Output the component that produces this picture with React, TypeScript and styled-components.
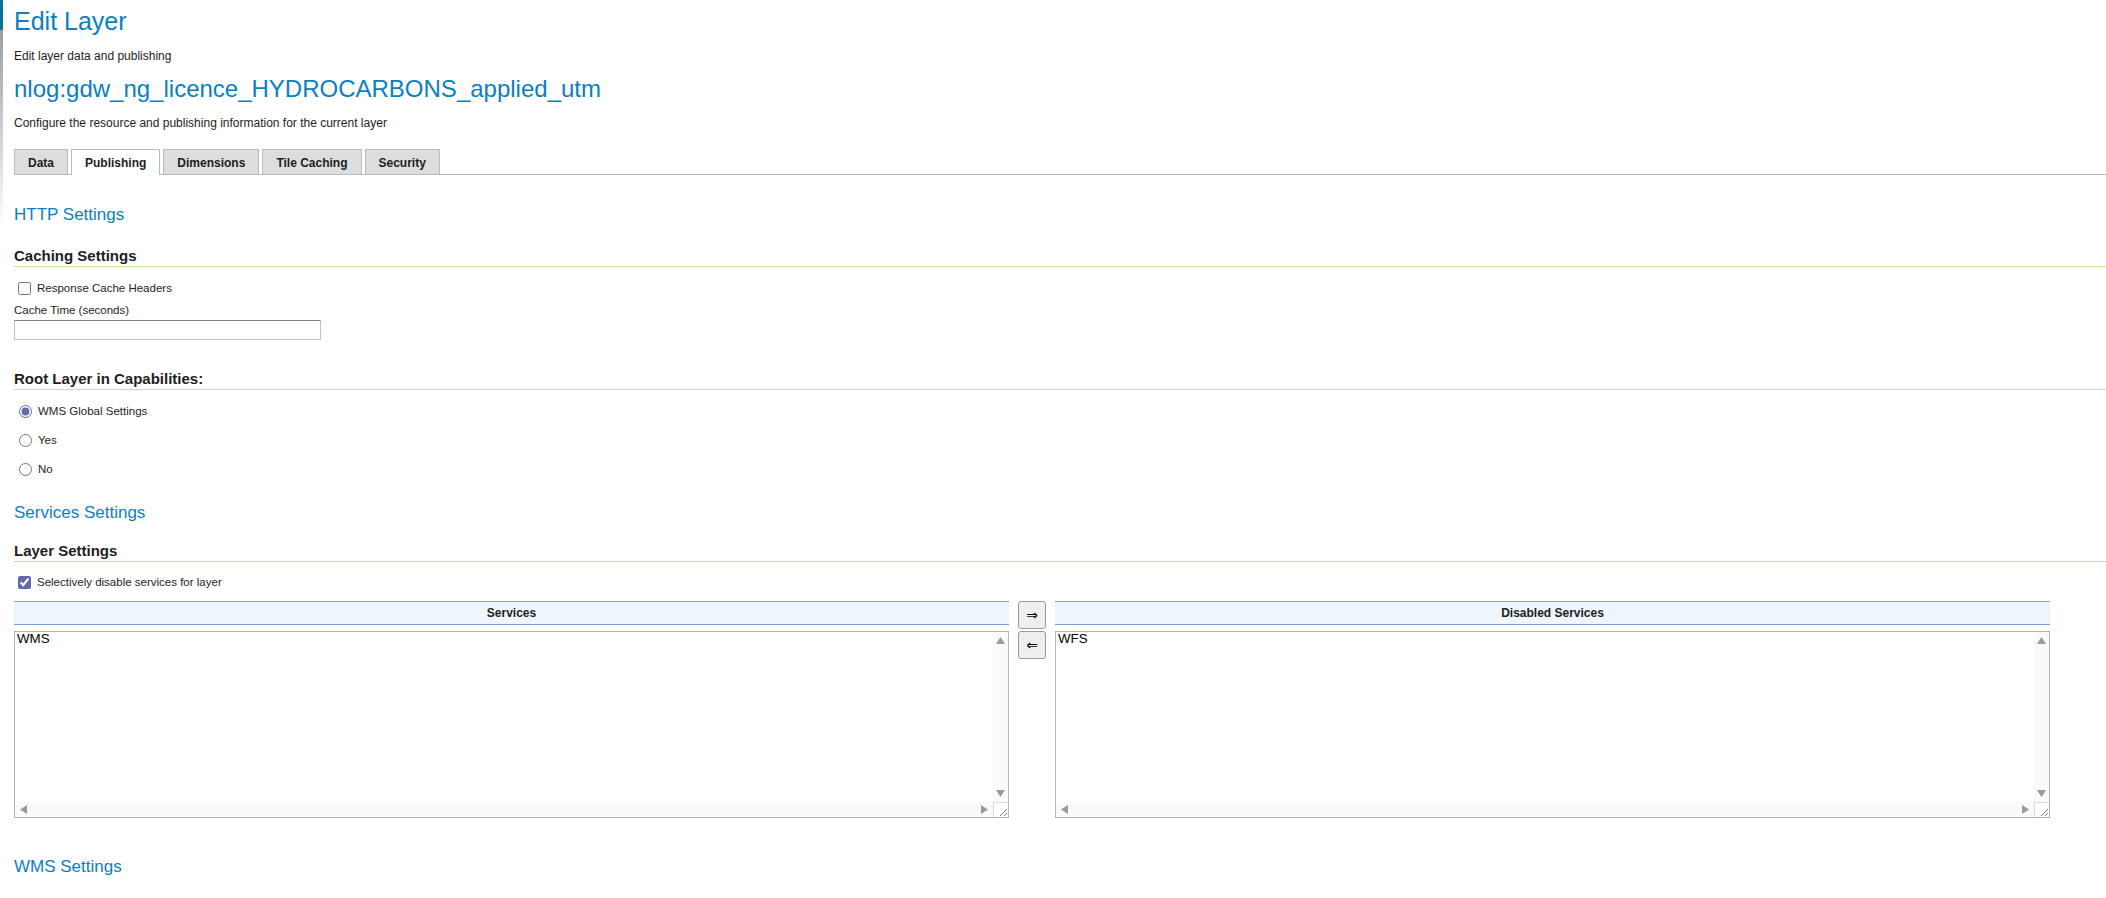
import React from "react";
import styled, { createGlobalStyle } from "styled-components";

const GlobalStyle = createGlobalStyle`
  html, body { margin: 0; padding: 0; background: #fff; }
  body {
    font-family: "Liberation Sans", Arial, sans-serif;
    color: #1e1e1e;
  }
`;

const BLUE = "#0b80be";

const Page = styled.div`
  display: flex;
  align-items: flex-start;
  width: 2106px;
  min-height: 898px;
  overflow: hidden;
`;

const SidebarEdge = styled.div`
  flex: 0 0 3px;
  height: 230px;
  background: linear-gradient(
    to bottom,
    #0d6f9c 0,
    #0d6f9c 30px,
    #9c9c9c 30px,
    #d4d4d4 140px,
    #ffffff 230px
  );
`;

const Content = styled.main`
  flex: 1;
  min-width: 0;
  padding-left: 11px;
`;

const PageTitle = styled.h1`
  margin: 3px 0 0;
  font-size: 25px;
  line-height: 36px;
  font-weight: normal;
  color: ${BLUE};
`;

const Description = styled.p<{ $top: number }>`
  margin: ${(p) => p.$top}px 0 0;
  font-size: 12px;
  line-height: 16px;
`;

const LayerName = styled.h2`
  margin: 10px 0 0;
  font-size: 24px;
  line-height: 30px;
  font-weight: normal;
  color: ${BLUE};
`;

const TabBar = styled.nav`
  display: flex;
  gap: 3px;
  margin-top: 18px;
  border-bottom: 1px solid #bbbbbb;
`;

const Tab = styled.div<{ $active?: boolean }>`
  padding: 2px 13px ${(p) => (p.$active ? "1px" : "0")};
  margin-bottom: ${(p) => (p.$active ? "-1px" : "0")};
  line-height: 22px;
  font-size: 12px;
  font-weight: bold;
  color: #1e1e1e;
  border: 1px solid #bbbbbb;
  border-bottom: none;
  background: ${(p) => (p.$active ? "#ffffff" : "#dddddd")};
`;

const SectionTitle = styled.h3<{ $top: number }>`
  margin: ${(p) => p.$top}px 0 0;
  font-size: 17px;
  line-height: 22px;
  font-weight: normal;
  color: ${BLUE};
`;

const GroupTitle = styled.h4<{ $top: number }>`
  margin: ${(p) => p.$top}px 0 0;
  font-size: 15px;
  line-height: 20px;
  font-weight: bold;
  color: #1e1e1e;
  border-bottom: 1px solid #c4e09c;
`;

const OptionRow = styled.label<{ $top?: number }>`
  display: flex;
  align-items: center;
  height: 16px;
  margin-top: ${(p) => p.$top ?? 0}px;
  font-size: 11.5px;
  line-height: 16px;
`;

const CheckBox = styled.input.attrs({ type: "checkbox" })`
  width: 13px;
  height: 13px;
  margin: 0 6px 0 4px;
  accent-color: #6669a9;
`;

const Radio = styled.input.attrs({ type: "radio" })`
  width: 13px;
  height: 13px;
  margin: 0 6px 0 5px;
  accent-color: #6669a9;
`;

const RadioGroup = styled.div`
  display: flex;
  flex-direction: column;
  gap: 13px;
  margin-top: 13px;
`;

const FieldLabel = styled.div`
  margin-top: 6px;
  font-size: 11.5px;
  line-height: 16px;
`;

const TextField = styled.input`
  display: block;
  box-sizing: border-box;
  width: 307px;
  height: 20px;
  margin: 2px 0 0;
  border: 1px solid #c2c2c2;
  border-top-color: #808080;
  background: #fff;
`;

const DualList = styled.div`
  display: grid;
  grid-template-columns: 1fr 28px 1fr;
  column-gap: 9px;
  width: 2036px;
  margin-top: 11px;
  align-items: start;
`;

const ListColumn = styled.div`
  display: flex;
  flex-direction: column;
  gap: 6px;
`;

const ListHeader = styled.div`
  border-top: 1px solid #7aa3d4;
  border-bottom: 1px solid #7aa3d4;
  background: #eef5fd;
  text-align: center;
  font-size: 12px;
  font-weight: bold;
  line-height: 22px;
`;

const ListBox = styled.div`
  display: grid;
  grid-template-columns: 1fr 15px;
  grid-template-rows: 1fr 15px;
  box-sizing: border-box;
  height: 187px;
  border: 1px solid #b5b5b5;
  background: #fff;
`;

const ListItems = styled.div`
  padding: 0 2px;
  font-family: "Liberation Sans", Arial, sans-serif;
  font-size: 13.33px;
  line-height: 14px;
  color: #000;
`;

const VScroll = styled.div`
  display: flex;
  flex-direction: column;
  justify-content: space-between;
  align-items: center;
  padding: 5px 0 5px;
  background: #fafafa;
`;

const HScroll = styled.div`
  display: flex;
  justify-content: space-between;
  align-items: center;
  padding: 0 5px 0 5px;
  background: #fafafa;
`;

const Corner = styled.div`
  display: flex;
  align-items: flex-end;
  justify-content: flex-end;
  border-left: 1px solid #dcdcdc;
  border-top: 1px solid #dcdcdc;
  background: #fff;
`;

const ButtonStack = styled.div`
  display: flex;
  flex-direction: column;
  gap: 2px;
`;

const MoveButton = styled.button`
  box-sizing: border-box;
  width: 28px;
  height: 28px;
  padding: 0;
  border: 1px solid #9a9a9a;
  border-radius: 3px;
  background: #efefef;
  color: #000;
  font-family: "DejaVu Sans", sans-serif;
  font-size: 14px;
  line-height: 26px;
`;

const Arrow = ({ dir }: { dir: "up" | "down" | "left" | "right" }) => {
  const pts = {
    up: "0,7 4.5,0 9,7",
    down: "0,0 9,0 4.5,7",
    left: "7,0 7,9 0,4.5",
    right: "0,0 7,4.5 0,9",
  }[dir];
  const vertical = dir === "up" || dir === "down";
  return (
    <svg width={vertical ? 9 : 7} height={vertical ? 7 : 9} viewBox={vertical ? "0 0 9 7" : "0 0 7 9"}>
      <polygon points={pts} fill="#9a9a9a" />
    </svg>
  );
};

const Grip = () => (
  <svg width="12" height="12" viewBox="0 0 12 12">
    <line x1="11" y1="4" x2="4" y2="11" stroke="#7a7a7a" strokeWidth="1" />
    <line x1="11" y1="8" x2="8" y2="11" stroke="#7a7a7a" strokeWidth="1" />
  </svg>
);

const ServiceList = ({ title, items }: { title: string; items: string[] }) => (
  <ListColumn>
    <ListHeader>{title}</ListHeader>
    <ListBox>
      <ListItems>
        {items.map((i) => (
          <div key={i}>{i}</div>
        ))}
      </ListItems>
      <VScroll>
        <Arrow dir="up" />
        <Arrow dir="down" />
      </VScroll>
      <HScroll>
        <Arrow dir="left" />
        <Arrow dir="right" />
      </HScroll>
      <Corner>
        <Grip />
      </Corner>
    </ListBox>
  </ListColumn>
);

const tabs = ["Data", "Publishing", "Dimensions", "Tile Caching", "Security"];

export default function App() {
  return (
    <>
      <GlobalStyle />
      <Page>
        <SidebarEdge />
        <Content>
          <PageTitle>Edit Layer</PageTitle>
          <Description $top={9}>Edit layer data and publishing</Description>
          <LayerName>nlog:gdw_ng_licence_HYDROCARBONS_applied_utm</LayerName>
          <Description $top={11}>Configure the resource and publishing information for the current layer</Description>

          <TabBar>
            {tabs.map((t) => (
              <Tab key={t} $active={t === "Publishing"}>
                {t}
              </Tab>
            ))}
          </TabBar>

          <SectionTitle $top={29}>HTTP Settings</SectionTitle>
          <GroupTitle $top={20}>Caching Settings</GroupTitle>
          <OptionRow $top={13}>
            <CheckBox />
            Response Cache Headers
          </OptionRow>
          <FieldLabel>Cache Time (seconds)</FieldLabel>
          <TextField type="text" />

          <GroupTitle $top={29}>Root Layer in Capabilities:</GroupTitle>
          <RadioGroup>
            <OptionRow>
              <Radio name="root" defaultChecked />
              WMS Global Settings
            </OptionRow>
            <OptionRow>
              <Radio name="root" />
              Yes
            </OptionRow>
            <OptionRow>
              <Radio name="root" />
              No
            </OptionRow>
          </RadioGroup>

          <SectionTitle $top={25}>Services Settings</SectionTitle>
          <GroupTitle $top={17}>Layer Settings</GroupTitle>
          <OptionRow $top={12}>
            <CheckBox defaultChecked />
            Selectively disable services for layer
          </OptionRow>

          <DualList>
            <ServiceList title="Services" items={["WMS"]} />
            <ButtonStack>
              <MoveButton>⇒</MoveButton>
              <MoveButton>⇐</MoveButton>
            </ButtonStack>
            <ServiceList title="Disabled Services" items={["WFS"]} />
          </DualList>

          <SectionTitle $top={38}>WMS Settings</SectionTitle>
        </Content>
      </Page>
    </>
  );
}
